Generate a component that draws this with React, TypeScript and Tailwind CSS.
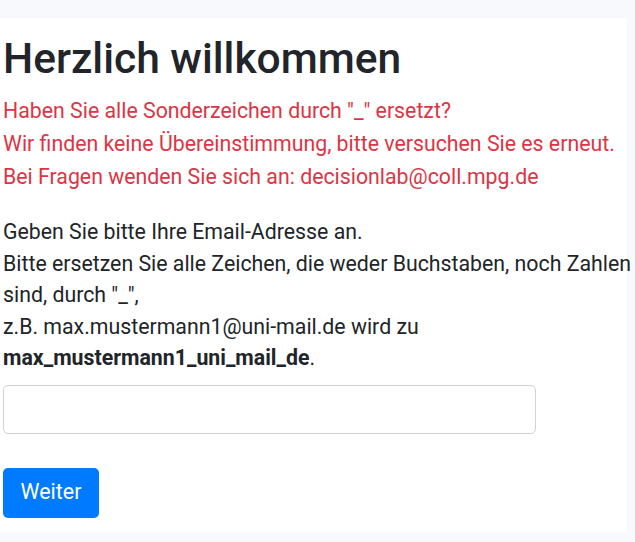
export default function App() {
  return (
    <div className="min-h-[542px] bg-[#f8f9fd] pt-[18px] font-['Roboto',sans-serif]">
      <div className="h-[514px] w-[627px] bg-white pl-[3px] pt-[17px] text-[21.3px] text-[#212529]">
        <h1 className="text-[42.5px] font-medium leading-[48px]">Herzlich willkommen</h1>
        <div className="mt-[11px] leading-[33px] text-[#dc3545]">
          <p>Haben Sie alle Sonderzeichen durch "_" ersetzt?</p>
          <p>Wir finden keine Übereinstimmung, bitte versuchen Sie es erneut.</p>
          <p>Bei Fragen wenden Sie sich an: decisionlab@coll.mpg.de</p>
        </div>
        <p className="mt-[23px] w-[632px] leading-[31.5px]">
          Geben Sie bitte Ihre Email-Adresse an.
          <br />
          Bitte ersetzen Sie alle Zeichen, die weder Buchstaben, noch Zahlen sind, durch "_",
          <br />
          z.B. max.mustermann1@uni-mail.de wird zu
          <br />
          <b className="font-bold">max_mustermann1_uni_mail_de</b>.
        </p>
        <input
          type="text"
          className="mt-[11px] block h-[49px] w-[533px] rounded-[5px] border border-[#ced4da] px-3 outline-none"
        />
        <button
          type="button"
          className="mt-[34px] h-[50px] w-[96px] rounded-[5px] bg-[#007bff] text-[21.4px] text-white"
        >
          Weiter
        </button>
      </div>
    </div>
  );
}
